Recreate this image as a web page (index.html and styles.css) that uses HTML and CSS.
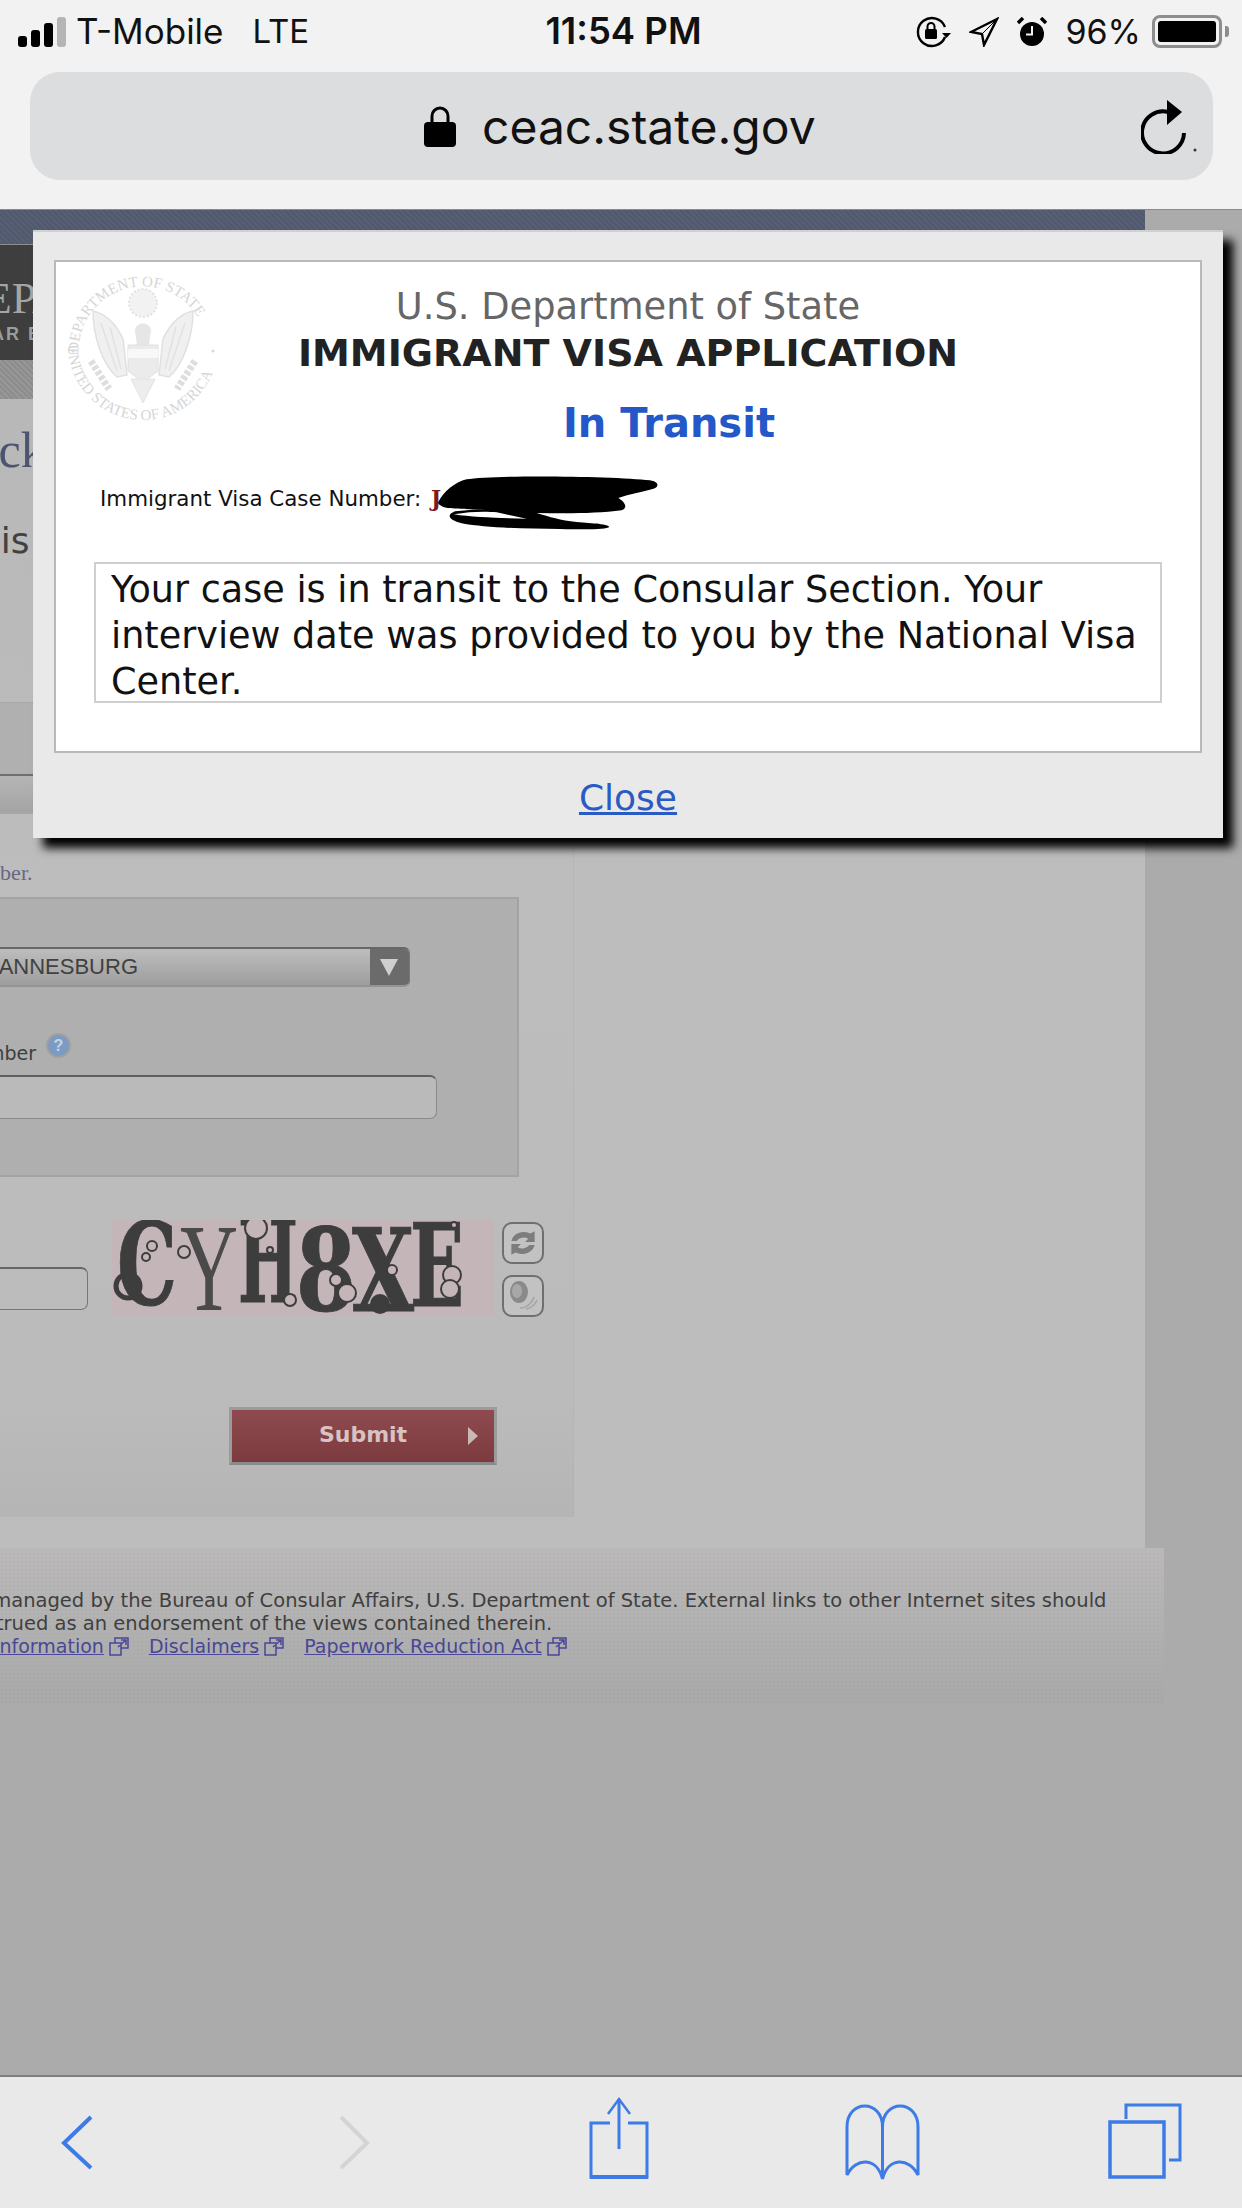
FILE: index.html
```html
<!DOCTYPE html>
<html>
<head>
  <meta charset="utf-8">
  <title>ceac.state.gov</title>
  <link rel="stylesheet" href="styles.css">
</head>
<body>
  <div class="toolbar">
    <div class="status-bar">
      <div class="status-left">
        <svg class="signal" width="50" height="30" viewBox="0 0 50 30">
          <rect x="0" y="19" width="9" height="11" rx="3" fill="#000"/>
          <rect x="13" y="13" width="9" height="17" rx="3" fill="#000"/>
          <rect x="26" y="6" width="9" height="24" rx="3" fill="#000"/>
          <rect x="39" y="0" width="9" height="30" rx="3" fill="#b5b5b5"/>
        </svg>
        <span class="carrier">T-Mobile</span>
        <span class="network">LTE</span>
      </div>
      <span class="clock">11:54 PM</span>
      <div class="status-right">
        <svg class="status-icon" width="36" height="32" viewBox="0 0 36 32">
          <path d="M30 21a14 14 0 1 1 0-10" fill="none" stroke="#000" stroke-width="2.4"/>
          <path d="M27 17h9l-4.500 5z" fill="#000"/>
          <rect x="10" y="13" width="12" height="10" rx="1.500" fill="#000"/>
          <path d="M12.500 13v-2.500a3.500 3.500 0 0 1 7 0V13" fill="none" stroke="#000" stroke-width="2"/>
        </svg>
        <svg class="status-icon" width="30" height="30" viewBox="0 0 30 30">
          <path d="M28 2L2 15l11 2 2 11z" fill="none" stroke="#000" stroke-width="2.400" stroke-linejoin="miter"/>
          <path d="M28 2L13 17" stroke="#000" stroke-width="1"/>
        </svg>
        <svg class="status-icon" width="30" height="30" viewBox="0 0 30 30">
          <circle cx="15" cy="17" r="12" fill="#000"/>
          <path d="M15 9v8.500H9" fill="none" stroke="#f2f2f2" stroke-width="2"/>
          <path d="M1 6l5-5M29 6l-5-5" stroke="#000" stroke-width="3.500"/>
        </svg>
        <span class="battery-pct">96%</span>
        <div class="battery"><div class="battery-fill"></div></div>
        <div class="battery-nub"></div>
      </div>
    </div>
    <div class="url-bar">
      <svg class="url-lock" width="32" height="41" viewBox="0 0 32 41">
        <path d="M8 18V10a8 8 0 0 1 16 0v8" fill="none" stroke="#000" stroke-width="3"/>
        <rect x="0" y="16" width="32" height="25" rx="4" fill="#000"/>
      </svg>
      <span class="url-text">ceac.state.gov</span>
      <svg class="url-reload" width="60" height="54" viewBox="0 0 60 54">
        <path d="M27 12A21 21 0 1 0 43 33" fill="none" stroke="#000" stroke-width="4"/>
        <path d="M26 0L41 12L26 25z" fill="#000"/>
        <circle cx="54" cy="50" r="1.500" fill="#333"/>
      </svg>
    </div>
  </div>

  <div class="page">
    <div class="site">
      <div class="site-top"></div>
      <div class="site-brand">
        <div class="brand-name">DEPARTMENT OF STATE</div>
        <div class="brand-sub">CONSULAR BUREAU</div>
      </div>
      <div class="site-nav"></div>
      <div class="site-content">
        <div class="col-left">
          <div class="heading">Check Your Status</div>
          <div class="intro">This</div>
          <div class="tab-band"></div>
          <div class="tab-strip"></div>
          <div class="note">number.</div>
          <div class="form-panel">
            <div class="select-box">
              <span class="select-value">JOHANNESBURG</span>
              <div class="select-arrow"></div>
            </div>
            <div class="field-label">
              <span class="field-text">Case Number</span>
              <span class="help-dot">?</span>
            </div>
            <div class="field-input"></div>
          </div>
          <div class="captcha-row">
            <div class="captcha-input"></div>
            <svg class="captcha" width="382" height="96" viewBox="0 0 382 96">
              <text class="cap-letter" x="5" y="84" textLength="60" lengthAdjust="spacingAndGlyphs">C</text>
              <text class="cap-thin" x="68" y="90" textLength="58" lengthAdjust="spacingAndGlyphs">Y</text>
              <text class="cap-letter" x="126" y="82" textLength="60" lengthAdjust="spacingAndGlyphs">H</text>
              <text class="cap-letter" x="184" y="90" textLength="60" lengthAdjust="spacingAndGlyphs">8</text>
              <text class="cap-letter" x="240" y="91" textLength="62" lengthAdjust="spacingAndGlyphs">X</text>
              <text class="cap-letter" x="298" y="86" textLength="54" lengthAdjust="spacingAndGlyphs">E</text>
              <circle cx="40" cy="26" r="5" class="cap-ring"/>
              <circle cx="34" cy="37" r="4" class="cap-ring"/>
              <circle cx="16" cy="66" r="12" class="cap-ring-big"/>
              <circle cx="72" cy="32" r="6" class="cap-ring"/>
              <circle cx="144" cy="8" r="11" class="cap-ring"/>
              <circle cx="158" cy="30" r="3" class="cap-ring"/>
              <circle cx="178" cy="80" r="6" class="cap-ring"/>
              <circle cx="224" cy="60" r="6" class="cap-ring"/>
              <circle cx="235" cy="73" r="9" class="cap-ring"/>
              <circle cx="268" cy="84" r="10" fill="#3d3d3d"/>
              <circle cx="280" cy="50" r="5" class="cap-ring"/>
              <circle cx="340" cy="55" r="9" class="cap-ring"/>
              <circle cx="338" cy="69" r="9" class="cap-ring"/>
              <circle cx="342" cy="5" r="3" class="cap-ring"/>
            </svg>
            <div class="captcha-tools">
              <div class="captcha-btn">
                <svg width="36" height="34" viewBox="0 0 34 32">
                  <path d="M6 14a12 10 0 0 1 18-7l4-2v10h-9l3-3a8 7 0 0 0-11 2z" fill="#7d7d7d"/>
                  <path d="M28 18a12 10 0 0 1-18 7l-4 2V17h9l-3 3a8 7 0 0 0 11-2z" fill="#7d7d7d"/>
                </svg>
              </div>
              <div class="captcha-btn">
                <svg width="34" height="34" viewBox="0 0 34 34">
                  <ellipse cx="13" cy="13" rx="9" ry="11" fill="#8a8a8a"/>
                  <ellipse cx="11" cy="12" rx="5" ry="7" fill="#a8a8a8"/>
                  <path d="M14 29c7 0 12-5 14-11M20 30c5-1 9-4 11-9" fill="none" stroke="#a5a5a5" stroke-width="1.500"/>
                </svg>
              </div>
            </div>
          </div>
          <div class="submit-btn">
            <span class="submit-text">Submit</span>
            <span class="submit-arrow"></span>
          </div>
        </div>
      </div>
    </div>
    <div class="site-footer">
      <div class="foot-line foot-one">This site is managed by the Bureau of Consular Affairs, U.S. Department of State. External links to other Internet sites should</div>
      <div class="foot-line foot-two">not be construed as an endorsement of the views contained therein.</div>
      <div class="foot-line foot-three">
        <a class="foot-link">Copyright Information</a>
        <svg class="ext-icon" width="20" height="19" viewBox="0 0 20 19"><path d="M1 6h11v12H1zM6 6V1h13v10h-7M9 10l8-7M12 3h5v5" fill="none" stroke="#4a4796" stroke-width="1.500"/></svg>
        <a class="foot-link">Disclaimers</a>
        <svg class="ext-icon" width="20" height="19" viewBox="0 0 20 19"><path d="M1 6h11v12H1zM6 6V1h13v10h-7M9 10l8-7M12 3h5v5" fill="none" stroke="#4a4796" stroke-width="1.500"/></svg>
        <a class="foot-link">Paperwork Reduction Act</a>
        <svg class="ext-icon" width="20" height="19" viewBox="0 0 20 19"><path d="M1 6h11v12H1zM6 6V1h13v10h-7M9 10l8-7M12 3h5v5" fill="none" stroke="#4a4796" stroke-width="1.500"/></svg>
      </div>
    </div>

    <div class="modal">
      <div class="modal-box">
        <svg class="seal" width="156" height="160" viewBox="0 0 156 160">
          <defs>
            <path id="sealTop" d="M14 90A64.500 64.500 0 1 1 142 90"/>
            <path id="sealBottom" d="M3 76A75 75 0 0 0 153 76"/>
          </defs>
          <text class="seal-text"><textPath href="#sealTop" startOffset="6">DEPARTMENT OF STATE</textPath></text>
          <text class="seal-text"><textPath href="#sealBottom">UNITED STATES OF AMERICA</textPath></text>
          <circle cx="78" cy="34" r="14" fill="#f2f2f2" stroke="#e2e2e2" stroke-width="2" stroke-dasharray="2 2"/>
          <path d="M28 42c10 2 22 10 30 28l4 36-10 2C38 96 28 68 28 42zM128 42c-10 2-22 10-30 28l-4 36 10 2c14-12 24-40 24-66z" fill="#f0f0f0" stroke="#e0e0e0" stroke-width="1.500"/>
          <path d="M36 54l16 48M45 58l11 42M120 54l-16 48M111 58l-11 42" stroke="#e2e2e2" stroke-width="1.500"/>
          <path d="M70 62c0-10 16-10 16 0l-2 14H72z" fill="#e6e6e6"/>
          <path d="M63 76h30v26l-15 11-15-11z" fill="#ebebeb" stroke="#e0e0e0"/>
          <rect x="63" y="80" width="30" height="9" fill="#f8f8f8"/>
          <path d="M66 110l12 24 12-24z" fill="#ededed" stroke="#e4e4e4"/>
          <path d="M26 92l18 28M130 92l-18 28" stroke="#dedede" stroke-width="7" stroke-dasharray="4 2"/>
          <circle cx="8" cy="82" r="1.500" fill="#d8d8d8"/>
          <circle cx="148" cy="82" r="1.500" fill="#d8d8d8"/>
        </svg>
        <div class="agency">U.S. Department of State</div>
        <div class="app-title">IMMIGRANT VISA APPLICATION</div>
        <div class="case-state">In Transit</div>
        <div class="case-line">Immigrant Visa Case Number: <span class="case-id">J</span></div>
        <div class="case-message">Your case is in transit to the Consular Section. Your interview date was provided to you by the National Visa Center.</div>
      </div>
      <a class="close-link">Close</a>
      <svg class="scribble" width="300" height="80" viewBox="0 0 900 240">
        <path d="M175 150C190 120 225 90 260 82C340 68 700 72 810 85C838 90 840 105 815 112C780 122 745 128 715 138C735 150 745 168 725 175C650 185 560 185 470 183C510 195 540 205 590 210C640 214 685 216 688 225C680 233 620 233 540 231C430 230 320 228 245 214C210 205 195 190 225 178C270 172 310 172 345 176C290 170 210 172 190 165C178 160 172 155 175 150Z" fill="#000"/>
        <path d="M222 187C270 178 320 178 350 181L440 200C370 198 280 197 222 187Z" fill="#fff"/>
      </svg>
    </div>
  </div>

  <div class="bottom-bar">
    <svg class="tool-icon" viewBox="0 0 134 133">
      <path d="M81 42L54 68L81 93" fill="none" stroke="#3d7be6" stroke-width="4"/>
    </svg>
    <svg class="tool-icon" viewBox="0 0 134 133">
      <path d="M64 42L90 68L64 93" fill="none" stroke="#d4d4d4" stroke-width="4"/>
    </svg>
    <svg class="tool-icon" viewBox="0 0 134 133">
      <path d="M66 48H47V102H103V48H84" fill="none" stroke="#3d7be6" stroke-width="3"/>
      <path d="M46 102H104" stroke="#3d7be6" stroke-width="4"/>
      <path d="M75 24V74" stroke="#3d7be6" stroke-width="3"/>
      <path d="M64 39L75 24L86 39" fill="none" stroke="#3d7be6" stroke-width="2.500"/>
    </svg>
    <svg class="tool-icon" viewBox="0 0 134 133">
      <path d="M71.500 52C71.500 24 36 24 36 52V100C45 82 66 82 71.500 104C77 82 98 82 107 100V52C107 24 71.500 24 71.500 52V104" fill="none" stroke="#3d7be6" stroke-width="3"/>
    </svg>
    <svg class="tool-icon" viewBox="0 0 134 133">
      <path d="M48 44V30H102V85H91" fill="none" stroke="#3d7be6" stroke-width="3"/>
      <rect x="32" y="47" width="54" height="55" fill="none" stroke="#3d7be6" stroke-width="3.500"/>
    </svg>
  </div>
</body>
</html>
```

FILE: styles.css
```css
* {
  box-sizing: border-box;
}

html, body {
  margin: 0;
  width: 1242px;
  height: 2208px;
  overflow: hidden;
}

body {
  display: flex;
  flex-direction: column;
  font-family: 'DejaVu Sans', sans-serif;
  background: #ababab;
}

/* browser chrome */
.toolbar {
  height: 210px;
  flex: none;
  background: #f2f2f2;
  border-bottom: 1px solid #8a8a8a;
}

.status-bar {
  height: 62px;
  padding: 15px 0 0 12px;
  display: flex;
  align-items: flex-start;
  font-family: 'Inter', sans-serif;
  font-size: 35px;
  line-height: 33px;
  color: #111;
}

.status-left {
  flex: 1;
  padding-left: 6px;
  display: flex;
  align-items: center;
}

.signal {
  flex: none;
}

.carrier {
  margin-left: 8px;
}

.network {
  margin-left: 29px;
  font-size: 33px;
}

.clock {
  flex: none;
  font-size: 36.5px;
  font-weight: 600;
}

.status-right {
  flex: 1;
  padding-right: 13px;
  display: flex;
  justify-content: flex-end;
  align-items: center;
  gap: 18px;
}

.status-icon {
  flex: none;
}

.battery-pct {
  font-size: 34px;
}

.battery {
  width: 70px;
  height: 33px;
  margin-left: -7px;
  border: 3px solid #8d8d8d;
  border-radius: 8px;
  padding: 3px;
}

.battery-fill {
  height: 100%;
  background: #000;
  border-radius: 3px;
}

.battery-nub {
  width: 4px;
  height: 11px;
  margin-left: -15px;
  background: #8d8d8d;
  border-radius: 0 3px 3px 0;
}

.url-bar {
  height: 108px;
  margin: 10px 29px 0 30px;
  background: #dcddde;
  border-radius: 30px;
  display: flex;
  align-items: center;
  padding-left: 394px;
  position: relative;
}

.url-lock {
  flex: none;
  margin-top: 1px;
}

.url-text {
  margin-left: 26px;
  font-family: 'Inter', sans-serif;
  font-size: 48px;
  color: #111;
}

.url-reload {
  position: absolute;
  right: 12px;
  top: 28px;
}

/* page behind the dialog */
.page {
  flex: 1;
  position: relative;
  overflow: hidden;
  background: #ababab;
}

.site {
  width: 1145px;
  height: 1338px;
  background: #bdbdbd;
  overflow: hidden;
}

.site-top {
  height: 35px;
  background: #535c6f;
  background-image: repeating-linear-gradient(45deg, #515a6d 0 2px, #565f73 2px 4px);
  border-bottom: 1px solid #8d8d8d;
}

.site-brand {
  height: 115px;
  background: #3e3e3e;
  padding-top: 31px;
  overflow: hidden;
  white-space: nowrap;
}

.brand-name {
  margin-left: -47px;
  font-family: 'Liberation Serif', serif;
  font-size: 44px;
  line-height: 46px;
  color: #a5a5a5;
}

.brand-sub {
  margin-left: -97px;
  font-family: 'Liberation Sans', sans-serif;
  font-weight: 700;
  font-size: 18px;
  line-height: 24px;
  letter-spacing: 2px;
  color: #9c9c9c;
}

.site-nav {
  height: 39px;
  background: #929292;
  background-image: repeating-linear-gradient(45deg, #8d8d8d 0 2px, #979797 2px 4px);
}

.site-content {
  display: flex;
  height: 1148px;
}

.col-left {
  width: 574px;
  height: 1118px;
  border-right: 1px dotted #aeaeae;
  background: linear-gradient(#b8b8b8 0, #bdbdbd 45%, #bbb 90%, #b5b5b5 100%);
  white-space: nowrap;
  overflow: hidden;
}

.heading {
  margin: 26px 0 0 -82px;
  font-family: 'Liberation Serif', serif;
  font-size: 50px;
  line-height: 50px;
  color: #4d5470;
}

.intro {
  margin: 46px 0 0 -44px;
  font-size: 36px;
  line-height: 40px;
  color: #414141;
}

.tab-band {
  height: 74px;
  margin-top: 141px;
  background: #b0b0b0;
  border-top: 1px dotted #a0a0a0;
  border-bottom: 2px solid #6e6e6e;
}

.tab-strip {
  height: 38px;
  background: linear-gradient(#b5b5b5, #a4a4a4);
  border-bottom: 1px solid #a8a8a8;
}

.note {
  margin: 45px 0 0 -39px;
  font-family: 'Liberation Serif', serif;
  font-size: 22px;
  line-height: 28px;
  color: #686880;
}

.form-panel {
  width: 519px;
  height: 280px;
  margin-top: 10px;
  background: #afafaf;
  border: 2px solid #a3a3a3;
  border-left: none;
  padding-top: 48px;
}

.select-box {
  width: 410px;
  height: 40px;
  display: flex;
  justify-content: flex-end;
  background: linear-gradient(#bdbdbd, #9e9e9e);
  border-top: 2px solid #686868;
  border-right: 1px solid #777;
  border-bottom: 2px solid #949494;
  border-radius: 0 6px 6px 0;
  overflow: hidden;
  position: relative;
}

.select-value {
  position: absolute;
  right: 271px;
  top: 4px;
  font-family: 'Liberation Sans', sans-serif;
  font-size: 22px;
  line-height: 28px;
  color: #414141;
}

.select-arrow {
  width: 39px;
  height: 100%;
  background: #6b6b6b;
  position: relative;
}

.select-arrow::after {
  content: '';
  position: absolute;
  left: 10px;
  top: 10px;
  border-left: 9px solid transparent;
  border-right: 9px solid transparent;
  border-top: 17px solid #cfcfcf;
}

.field-label {
  width: 71px;
  height: 42px;
  margin-top: 46px;
  display: flex;
  justify-content: flex-end;
  align-items: flex-start;
  position: relative;
}

.field-text {
  position: absolute;
  right: 35px;
  top: 8px;
  font-size: 19px;
  line-height: 24px;
  color: #3e3e3e;
}

.help-dot {
  width: 25px;
  height: 25px;
  border-radius: 50%;
  background: #7c9bc3;
  border: 2px solid #a0a0a0;
  color: #c4d4e4;
  font-family: 'Liberation Sans', sans-serif;
  font-weight: 700;
  font-size: 16px;
  line-height: 21px;
  text-align: center;
}

.field-input {
  width: 437px;
  height: 44px;
  background: #bababa;
  border: 1px solid #8a8a8a;
  border-top: 2px solid #5f5f5f;
  border-left: none;
  border-radius: 0 7px 7px 0;
}

.captcha-row {
  height: 96px;
  margin-top: 43px;
  display: flex;
  align-items: flex-start;
}

.captcha-input {
  width: 88px;
  height: 43px;
  margin-top: 47px;
  background: #bcbcbc;
  border: 1px solid #777;
  border-top: 2px solid #666;
  border-left: none;
  border-radius: 0 7px 7px 0;
}

.captcha {
  flex: none;
  margin-left: 24px;
  background: #c4b5b9;
  filter: blur(0.5px);
}

.cap-letter {
  font-family: 'DejaVu Serif', serif;
  font-weight: 700;
  font-size: 114px;
  fill: #3d3d3d;
  stroke: #3d3d3d;
  stroke-width: 1;
}

.cap-thin {
  font-family: 'Liberation Serif', serif;
  font-size: 124px;
  fill: #4a4a4a;
}

.cap-ring {
  fill: #c4b5b9;
  stroke: #3d3d3d;
  stroke-width: 2;
}

.cap-ring-big {
  fill: none;
  stroke: #3d3d3d;
  stroke-width: 5;
}

.captcha-tools {
  margin-left: 8px;
  padding-top: 2px;
  display: flex;
  flex-direction: column;
  gap: 11px;
}

.captcha-btn {
  width: 42px;
  height: 42px;
  border: 2px solid #6f6f6f;
  border-radius: 10px;
  background: #c2c2c2;
  display: flex;
  align-items: center;
  justify-content: center;
}

.submit-btn {
  width: 268px;
  height: 58px;
  margin: 91px 0 0 229px;
  border: 3px solid #9b9b9b;
  border-bottom-color: #8a8a8a;
  background: linear-gradient(#8e4a4f, #7c3b3f);
  display: flex;
  align-items: center;
  justify-content: center;
  position: relative;
}

.submit-text {
  margin-top: -3px;
  font-weight: 700;
  font-size: 22px;
  color: #d8c3c3;
}

.submit-arrow {
  position: absolute;
  right: 16px;
  top: 17px;
  border-top: 9px solid transparent;
  border-bottom: 9px solid transparent;
  border-left: 10px solid #c9b9b5;
}

.site-footer {
  width: 1164px;
  height: 155px;
  padding-top: 41px;
  background-color: #b2b1b1;
  background-image: radial-gradient(rgba(0, 0, 0, 0.02) 1px, transparent 1px), linear-gradient(#bbb9b9, #a9a9a9);
  background-size: 4px 4px, 100% 100%;
  white-space: nowrap;
  overflow: hidden;
  font-size: 19.5px;
  line-height: 23px;
  color: #3f3f3f;
}

.foot-line {
  display: flex;
  align-items: center;
}

.foot-one {
  margin-left: -117px;
}

.foot-two {
  margin-left: -118px;
}

.foot-three {
  margin-left: -105px;
}

.foot-link {
  font-size: 19px;
  color: #4a4796;
  text-decoration: underline;
}

.ext-icon {
  flex: none;
  margin: 0 20px 0 5px;
}

/* dialog */
.modal {
  position: absolute;
  left: 33px;
  top: 20px;
  width: 1190px;
  height: 608px;
  padding: 31px 21px 0;
  background: #e9e9e9;
  border-top: 2px solid #cfd0d4;
  box-shadow: 10px 10px 9px #000;
}

.modal-box {
  height: 493px;
  margin-top: -3px;
  padding-top: 22px;
  background: #fff;
  border: 2px solid #b9b9b9;
  position: relative;
  text-align: center;
}

.seal {
  position: absolute;
  left: 9px;
  top: 7px;
}

.seal-text {
  font-family: 'Liberation Serif', serif;
  font-size: 15px;
  fill: #d6d6d6;
}

.agency {
  font-size: 36.8px;
  line-height: 46px;
  color: #666;
}

.app-title {
  font-weight: 700;
  font-size: 38px;
  line-height: 46px;
  color: #222;
}

.case-state {
  margin-top: 24px;
  padding-left: 82px;
  font-weight: 700;
  font-size: 40px;
  line-height: 46px;
  color: #2458c8;
}

.case-line {
  margin: 38px 0 0 44px;
  font-size: 21.4px;
  line-height: 30px;
  color: #111;
  text-align: left;
}

.case-id {
  margin-left: 3px;
  font-family: 'DejaVu Serif', serif;
  font-weight: 700;
  color: #7a1a1a;
}

.case-message {
  width: 1068px;
  height: 141px;
  margin: 48px 0 0 38px;
  padding: 3px 15px 0;
  border: 2px solid #cfcfcf;
  font-size: 36.6px;
  line-height: 46px;
  color: #111;
  text-align: left;
}

.close-link {
  display: block;
  margin-top: 23px;
  font-size: 36px;
  line-height: 44px;
  color: #2a5bc4;
  text-decoration: underline;
  text-align: center;
}

.scribble {
  position: absolute;
  left: 347px;
  top: 220px;
}

/* bottom safari bar */
.bottom-bar {
  height: 133px;
  flex: none;
  padding: 0 30px 0 10px;
  display: flex;
  justify-content: space-between;
  background: #e9e9ea;
  border-top: 2px solid #7f7f7f;
}

.tool-icon {
  width: 134px;
  height: 133px;
  flex: none;
  margin-top: -2px;
}
```
